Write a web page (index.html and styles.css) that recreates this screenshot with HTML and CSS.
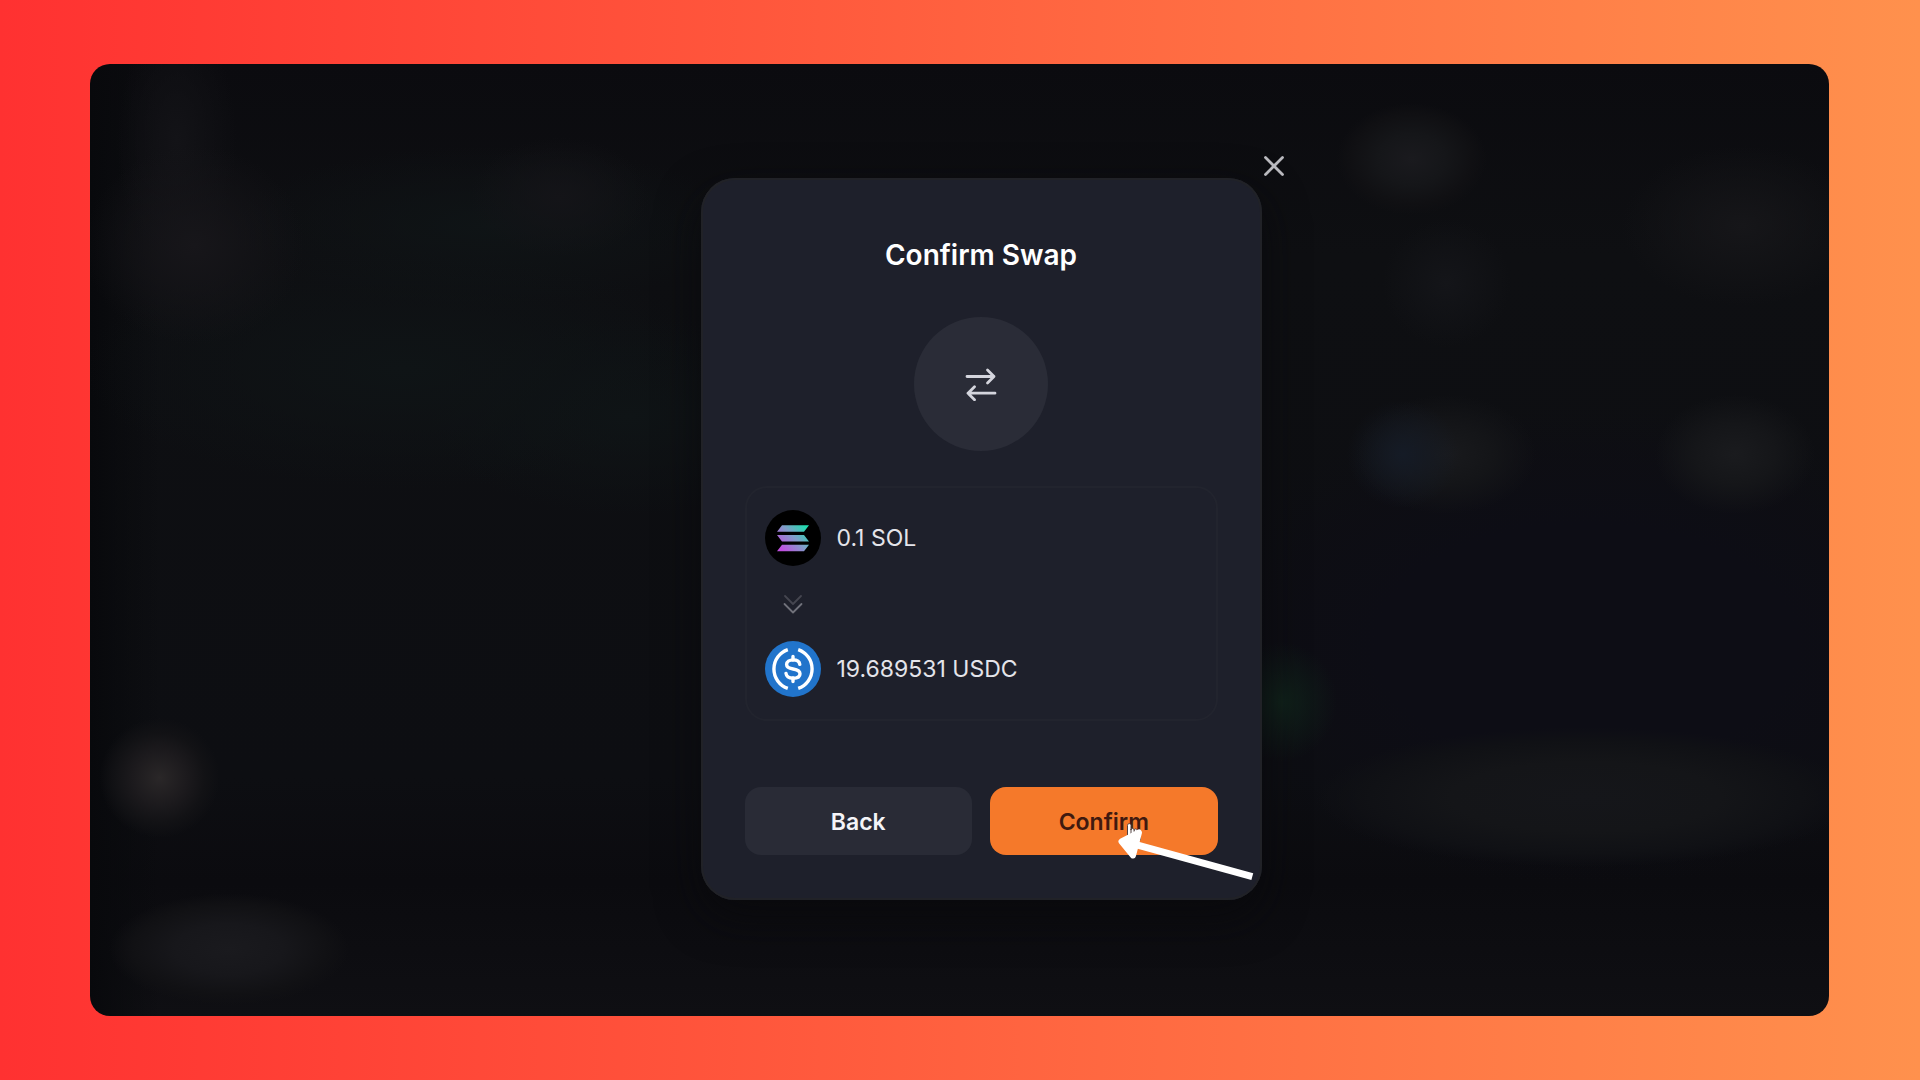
FILE: index.html
```html
<!DOCTYPE html>
<html lang="en">
<head>
<meta charset="utf-8">
<meta name="viewport" content="width=device-width, initial-scale=1">
<title>Confirm Swap</title>
<link rel="stylesheet" href="styles.css">
</head>
<body>
<main class="frame">
  <div class="screen">
    <section class="modal" role="dialog" aria-modal="true" aria-labelledby="modal-title">
      <button class="close" type="button" aria-label="Close">
        <svg width="20" height="20" viewBox="0 0 20 20" fill="none" stroke="#b9b9be" stroke-width="2.8" stroke-linecap="round"><path d="M1.500 1.500l17 17M18.500 1.500l-17 17"/></svg>
      </button>

      <h1 class="title" id="modal-title">Confirm Swap</h1>

      <div class="badge">
        <svg width="32" height="34" viewBox="0 0 32 34" fill="none" stroke="#d4d5dd" stroke-width="2.8" stroke-linecap="round" stroke-linejoin="round"><path d="M2 9.500h27M22.500 3l6.500 6.500-6.500 6.500"/><path d="M30 26.200H3M9.500 19.700L3 26.200l6.500 6.500"/></svg>
      </div>

      <ul class="tokens">
        <li class="token">
          <svg class="token-icon" viewBox="0 0 56 56">
            <defs>
              <linearGradient id="sol" x1="14" y1="42" x2="42" y2="15" gradientUnits="userSpaceOnUse">
                <stop offset="0.1" stop-color="#c04fe0"/><stop offset="0.55" stop-color="#7f9fc8"/><stop offset="0.95" stop-color="#1fdcae"/>
              </linearGradient>
            </defs>
            <circle cx="28" cy="28" r="28" fill="#000"/>
            <path fill="url(#sol)" d="M17 15.200h27l-5 6.500H12zM12 25h27l5 6.500H17zM17 34.800h27l-5 6.500H12z"/>
          </svg>
          <span>0.1 SOL</span>
        </li>
        <li class="step" aria-hidden="true">
          <svg width="20" height="20" viewBox="0 0 20 20" fill="none" stroke-width="1.8" stroke-linecap="round" stroke-linejoin="round"><path stroke="#454650" d="M2 2l8 8 8-8"/><path stroke="#70717a" d="M1.500 10l8.500 8.500 8.500-8.500"/></svg>
        </li>
        <li class="token">
          <svg class="token-icon" viewBox="0 0 56 56">
            <circle cx="28" cy="28" r="28" fill="#2174cb"/>
            <g fill="none" stroke="#fff" stroke-width="3.400" stroke-linecap="butt">
              <path d="M22.800 8.600a20.500 20.500 0 0 0 0 38.800M33.200 8.600a20.500 20.500 0 0 1 0 38.800"/>
              <path stroke-linecap="round" d="M28 15.500v3.500M28 37v3.500"/>
              <path stroke-linecap="round" d="M34.800 23.400c-.4-2.900-3.100-4.500-6.700-4.500-3.700 0-6.500 1.700-6.500 4.600 0 3 2.700 3.800 6.500 4.500 3.900.7 6.900 1.600 6.900 4.700 0 2.900-2.900 4.500-6.900 4.500-4 0-6.700-1.700-7.100-4.800"/>
            </g>
          </svg>
          <span>19.689531 USDC</span>
        </li>
      </ul>

      <div class="actions">
        <button class="btn btn-back" type="button">Back</button>
        <button class="btn btn-confirm" type="button">Confirm</button>
      </div>

      <svg class="pointer" width="140" height="64" viewBox="0 0 140 64" aria-hidden="true">
        <path fill="#fff" stroke="#51413f" stroke-width="1" d="M12.500 20V7.500c0-2.500 3.500-2.500 3.500 0V12c0-2 3.200-2 3.200.300 0-2 3.100-1.800 3.100.500 0-1.700 3-1.500 3 .700V22z"/>
        <path stroke="#51413f" stroke-width="1" d="M16 11v6M19.200 12v6M22.300 12.500v5"/>
        <path stroke="#fff" stroke-width="7" d="M20 26.300L137.300 58.700"/>
        <path fill="#fff" stroke="#fff" stroke-width="6" stroke-linejoin="round" d="M6.500 23.500L24 14.500 18 37.500z"/>
      </svg>
    </section>
  </div>
</main>
</body>
</html>
```
FILE: styles.css
```css
* {
  box-sizing: border-box;
}

body {
  margin: 0;
  font-family: Inter, "Liberation Sans", sans-serif;
  color: #e4e4ea;
}

.frame {
  display: flex;
  min-height: 100vh;
  padding: 64px 91px 64px 90px;
  background: linear-gradient(90deg, #ff3131, #ff914d);
}

/* Blurred app behind the dialog */
.screen {
  flex: 1;
  display: flex;
  justify-content: center;
  align-items: flex-start;
  padding: 114px 0 114px 43px;
  border-radius: 20px;
  background:
    radial-gradient(60px 60px at 4% 75%, #2a2728, #1c1a1d 45%, #121215 75%, transparent),
    radial-gradient(120px 56px at 8% 93%, #1a1a1e, #17171b 45%, #111114 80%, transparent),
    radial-gradient(110px 100px at 6% 19%, #17161a, transparent),
    radial-gradient(60px 120px at 5% 8%, #131317, transparent),
    radial-gradient(90px 60px at 27% 14%, #141418, transparent),
    radial-gradient(75px 56px at 76% 10%, #1a1a1e, #151619 45%, #101013 80%, transparent),
    radial-gradient(64px 64px at 78% 23%, #141519, transparent),
    radial-gradient(120px 80px at 95% 17%, #161619, transparent),
    radial-gradient(56px 54px at 75.500% 41%, #151b26, transparent),
    radial-gradient(90px 60px at 78% 41%, #191a1d, #141518 50%, transparent),
    radial-gradient(80px 60px at 94.600% 41%, #1a1b1e, #151619 50%, transparent),
    radial-gradient(56px 60px at 68.500% 67%, #10211a, transparent),
    radial-gradient(270px 70px at 86% 77%, #15161a, #141518 50%, #101115 80%, transparent),
    radial-gradient(420px 240px at 86% 61%, #0d0d15, #0d0d15 50%, transparent),
    radial-gradient(320px 120px at 18% 32%, #0f1416, transparent),
    radial-gradient(260px 80px at 23% 17%, #0f1416, transparent),
    radial-gradient(200px 100px at 31% 37%, #0f1416, transparent),
    linear-gradient(90deg, #08090c, transparent 4%),
    linear-gradient(#0b0b0f, #0e0f12 20%, #0d0e12 75%, #0b0b0f 86%, #0f0f13);
}

.modal {
  position: relative;
  width: 561px;
  padding: 60px 44px 45px;
  border-radius: 34px;
  background: #1e202b;
  box-shadow: inset 0 0 0 2px #212227, 0 16px 44px #08080cb3;
}

.close {
  position: absolute;
  top: -30px;
  right: -30px;
  display: grid;
  place-items: center;
  width: 36px;
  height: 36px;
  padding: 0;
  border: 0;
  background: none;
}

.title {
  margin: 0;
  font-size: 28px;
  line-height: 34px;
  font-weight: 600;
  text-align: center;
  color: #fff;
}

.badge {
  display: grid;
  place-items: center;
  width: 134px;
  height: 134px;
  margin: 45px auto 35px;
  border-radius: 50%;
  background: #2a2c37;
}

.tokens {
  margin: 0;
  padding: 22px 18px;
  list-style: none;
  border: 2px solid #22242e;
  border-radius: 22px;
}

.token {
  display: flex;
  align-items: center;
  gap: 16px;
  font-size: 23px;
  line-height: 32px;
}

.token-icon {
  width: 56px;
  height: 56px;
}

.step {
  display: grid;
  place-items: center;
  width: 56px;
  height: 75px;
}

.actions {
  display: grid;
  grid-template-columns: 1fr 1fr;
  gap: 18px;
  margin-top: 66px;
}

.btn {
  height: 68px;
  padding: 2px 0 0;
  border: 0;
  border-radius: 16px;
  font: 600 23px/32px Inter, "Liberation Sans", sans-serif;
}

.btn-back {
  background: #292b36;
  color: #f4f4f8;
}

.btn-confirm {
  background: #f5792a;
  color: #40190f;
}

.pointer {
  position: absolute;
  right: 7px;
  bottom: 18px;
}
```
